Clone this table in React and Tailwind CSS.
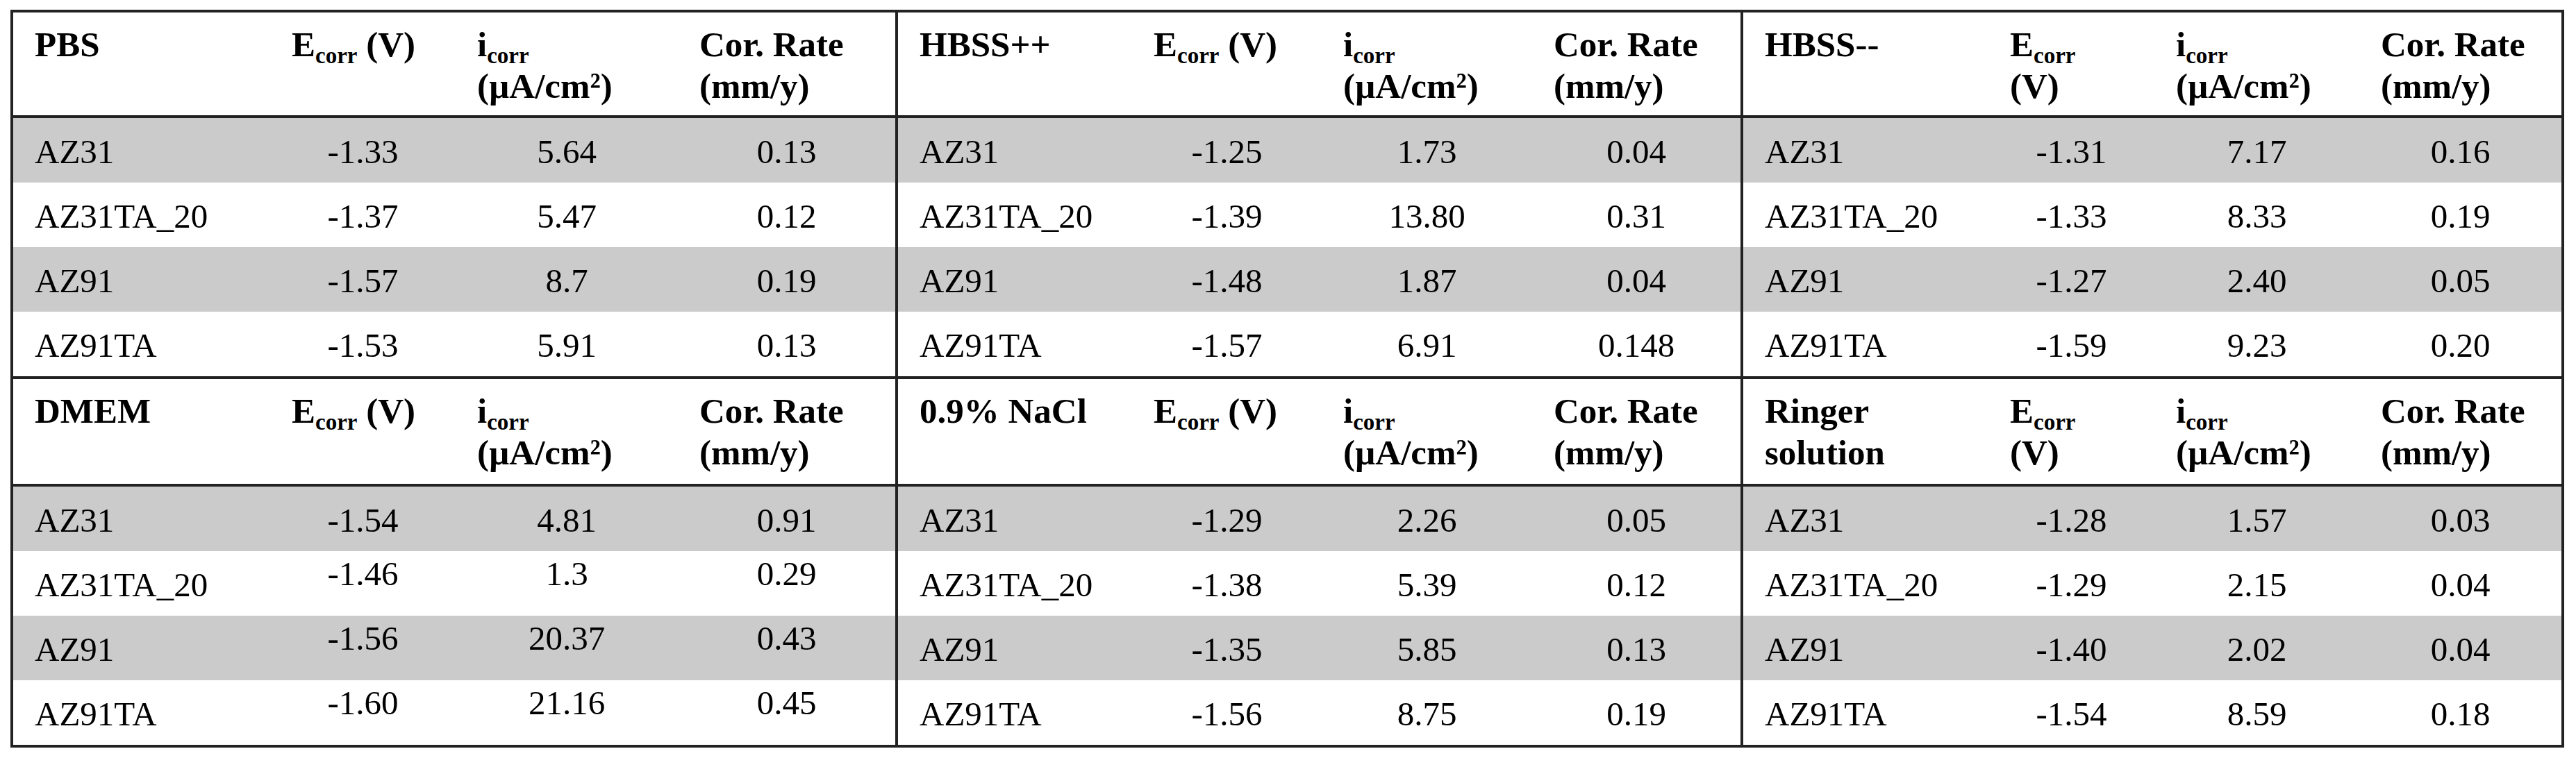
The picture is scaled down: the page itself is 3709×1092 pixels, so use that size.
import React from 'react';

const COLS =
  'grid grid-cols-[370px_267px_320px_313px_341px_273px_303px_300px_357px_239px_295px_291px]';

const top = [
  {
    name: 'PBS',
    rows: [
      ['AZ31', '-1.33', '5.64', '0.13'],
      ['AZ31TA_20', '-1.37', '5.47', '0.12'],
      ['AZ91', '-1.57', '8.7', '0.19'],
      ['AZ91TA', '-1.53', '5.91', '0.13'],
    ],
  },
  {
    name: 'HBSS++',
    rows: [
      ['AZ31', '-1.25', '1.73', '0.04'],
      ['AZ31TA_20', '-1.39', '13.80', '0.31'],
      ['AZ91', '-1.48', '1.87', '0.04'],
      ['AZ91TA', '-1.57', '6.91', '0.148'],
    ],
  },
  {
    name: 'HBSS--',
    wrapE: true,
    rows: [
      ['AZ31', '-1.31', '7.17', '0.16'],
      ['AZ31TA_20', '-1.33', '8.33', '0.19'],
      ['AZ91', '-1.27', '2.40', '0.05'],
      ['AZ91TA', '-1.59', '9.23', '0.20'],
    ],
  },
];

const bottom = [
  {
    name: 'DMEM',
    raised: true,
    rows: [
      ['AZ31', '-1.54', '4.81', '0.91'],
      ['AZ31TA_20', '-1.46', '1.3', '0.29'],
      ['AZ91', '-1.56', '20.37', '0.43'],
      ['AZ91TA', '-1.60', '21.16', '0.45'],
    ],
  },
  {
    name: '0.9% NaCl',
    rows: [
      ['AZ31', '-1.29', '2.26', '0.05'],
      ['AZ31TA_20', '-1.38', '5.39', '0.12'],
      ['AZ91', '-1.35', '5.85', '0.13'],
      ['AZ91TA', '-1.56', '8.75', '0.19'],
    ],
  },
  {
    name: 'Ringer solution',
    lines: ['Ringer', 'solution'],
    wrapE: true,
    rows: [
      ['AZ31', '-1.28', '1.57', '0.03'],
      ['AZ31TA_20', '-1.29', '2.15', '0.04'],
      ['AZ91', '-1.40', '2.02', '0.04'],
      ['AZ91TA', '-1.54', '8.59', '0.18'],
    ],
  },
];

const Sub = ({ children }) => (
  <span className="text-[33px] leading-[0px] align-[-10px]">{children}</span>
);

// first cell of groups 2 and 3 carries the divider line
const groupEdge = (g) => (g === 0 ? '' : 'border-l-4 border-[#222]');

function HeaderRow({ groups, height }) {
  return (
    <div className={`${COLS} ${height} border-b-4 border-[#222] font-bold text-[51px] leading-[60px]`}>
      {groups.map((grp, g) => (
        <React.Fragment key={grp.name}>
          <div className={`pl-[31px] pt-[16px] whitespace-nowrap ${groupEdge(g)}`}>
            {grp.lines ? (
              <>
                {grp.lines[0]}
                <br />
                {grp.lines[1]}
              </>
            ) : (
              grp.name
            )}
          </div>
          <div className="pl-[31px] pt-[16px] whitespace-nowrap">
            E<Sub>corr</Sub>
            {grp.wrapE ? <br /> : ' '}
            (V)
          </div>
          <div className="pl-[31px] pt-[16px] whitespace-nowrap">
            i<Sub>corr</Sub>
            <br />
            (µA/cm²)
          </div>
          <div className="pl-[31px] pt-[16px] whitespace-nowrap">
            Cor. Rate
            <br />
            (mm/y)
          </div>
        </React.Fragment>
      ))}
    </div>
  );
}

function DataRow({ groups, index }) {
  const bg = index % 2 === 0 ? 'bg-[#cbcbcb]' : 'bg-white';
  return (
    <div className={`${COLS} h-[93px] ${bg} text-[49px] leading-[60px]`}>
      {groups.map((grp, g) => {
        const [label, e, i, rate] = grp.rows[index];
        const shift = grp.raised && index > 0 ? 'pb-[28px]' : 'pt-[4px]';
        return (
          <React.Fragment key={grp.name}>
            <div className={`flex items-center pl-[31px] pt-[4px] whitespace-nowrap ${groupEdge(g)}`}>
              {label}
            </div>
            <div className={`flex items-center justify-center ${shift}`}>{e}</div>
            <div className={`flex items-center justify-center ${shift}`}>{i}</div>
            <div className={`flex items-center justify-center ${shift}`}>{rate}</div>
          </React.Fragment>
        );
      })}
    </div>
  );
}

export default function App() {
  return (
    <div className="min-h-screen bg-white pt-[14px] pl-[15px] font-['Liberation_Serif','Times_New_Roman',serif] text-black">
      <div className="w-[3677px] border-4 border-[#222]">
        <HeaderRow groups={top} height="h-[152px]" />
        {[0, 1, 2, 3].map((r) => (
          <DataRow key={r} groups={top} index={r} />
        ))}
        <div className="border-t-4 border-[#222]">
          <HeaderRow groups={bottom} height="h-[155px]" />
          {[0, 1, 2, 3].map((r) => (
            <DataRow key={r} groups={bottom} index={r} />
          ))}
        </div>
      </div>
    </div>
  );
}
